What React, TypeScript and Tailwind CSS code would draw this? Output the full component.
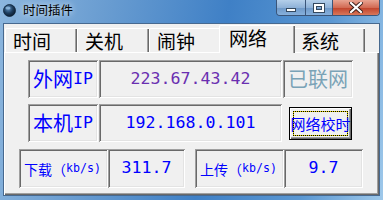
import React from "react";

const cjk = "font-['Noto_Sans_CJK_SC',sans-serif]";
const mono = "font-['DejaVu_Sans_Mono',monospace]";

// sunken 3D edge, like a classic win32 static with client edge
const sunken =
  "shadow-[inset_1px_1px_0_#a0a0a0,inset_-1px_-1px_0_#ffffff,inset_2px_2px_0_#696969,inset_-2px_-2px_0_#e3e3e3]";

function Box({ className, children }: { className: string; children?: React.ReactNode }) {
  return (
    <div className={`flex items-center h-full bg-[#f0f0f0] ${sunken} ${className}`}>
      {children}
    </div>
  );
}

function TitleBar() {
  return (
    <div className="flex h-[23px] shrink-0">
      <div className="flex items-center pl-[3px] gap-[7px] h-[21px]">
        <svg width="13" height="13" viewBox="0 0 13 13">
          <defs>
            <radialGradient id="g" cx="0.4" cy="0.35" r="0.7">
              <stop offset="0" stopColor="#5d8fbf" />
              <stop offset="0.55" stopColor="#1d3c5c" />
              <stop offset="1" stopColor="#0b1a2b" />
            </radialGradient>
          </defs>
          <circle cx="6.5" cy="6.5" r="6" fill="url(#g)" stroke="#0f2338" strokeWidth="0.8" />
          <ellipse cx="5" cy="4" rx="2.6" ry="1.5" fill="#9cc4e8" opacity="0.7" />
        </svg>
        <span
          className={`${cjk} text-[12.5px] leading-none text-black [text-shadow:0_0_6px_rgba(255,255,255,0.9)]`}
        >
          时间插件
        </span>
      </div>
      <div className="flex-1" />
      {/* caption buttons */}
      <div className="flex h-[16px] mr-[3px] border border-t-0 border-[#3a5579] rounded-b-[4px] overflow-hidden">
        <div className="w-[29px] flex items-end justify-center pb-[3px] bg-[linear-gradient(180deg,#b4cfea_0%,#8fb2d8_50%,#6e98c7_51%,#86b0dc_100%)] border-r border-[#3a5579]">
          <div className="w-[10px] h-[4px] bg-white border border-[#34495f]" />
        </div>
        <div className="w-[27px] flex items-center justify-center bg-[linear-gradient(180deg,#b4cfea_0%,#8fb2d8_50%,#6e98c7_51%,#86b0dc_100%)] border-r border-[#3a5579]">
          <div className="w-[10px] h-[8px] border-[2px] border-white shadow-[0_0_0_1px_#34495f,inset_0_0_0_1px_#34495f]" />
        </div>
        <div className="w-[46px] flex items-center justify-center bg-[linear-gradient(180deg,#e8a492_0%,#d26b54_50%,#c0412a_51%,#d8775a_100%)]">
          <svg width="14" height="11" viewBox="0 0 14 11">
            <path d="M2 1 L12 10 M12 1 L2 10" stroke="#3b1f1a" strokeWidth="4" strokeLinecap="square" />
            <path d="M2 1 L12 10 M12 1 L2 10" stroke="#ffffff" strokeWidth="2.2" strokeLinecap="square" />
          </svg>
        </div>
      </div>
    </div>
  );
}

function Tab({ label, active }: { label: string; active?: boolean }) {
  if (active) {
    return (
      <div
        className={`relative z-10 w-[76px] h-[28px] -mx-[2px] -mb-[1px] bg-[#f0f0f0] border-t border-l border-white rounded-tl-[2px] shadow-[inset_-1px_0_0_#696969,inset_-2px_0_0_#a0a0a0] pl-[9px] pt-[1px] ${cjk} text-[19px] leading-[22px] text-black`}
      >
        {label}
      </div>
    );
  }
  return (
    <div
      className={`w-[72px] h-[24px] bg-[#f0f0f0] border-t border-l border-white rounded-tl-[2px] shadow-[inset_-1px_0_0_#696969,inset_-2px_0_0_#a0a0a0] pl-[7px] pt-[1px] ${cjk} text-[19px] leading-[22px] text-black`}
    >
      {label}
    </div>
  );
}

export default function App() {
  return (
    <div className="w-[383px] h-[200px] overflow-hidden flex flex-col bg-[linear-gradient(100deg,#8cb6de_0%,#6a9dd1_25%,#3f80c6_55%,#5a97d2_80%,#9ec8ea_100%)]">
      <TitleBar />
      <div className="flex-1 mx-[3px] mb-[4px] border border-[#47698f] bg-[#f0f0f0] flex flex-col">
        {/* tab strip */}
        <div className="flex items-end h-[28px] pl-[1px] shrink-0">
          <Tab label="时间" />
          <Tab label="关机" />
          <Tab label="闹钟" />
          <Tab label="网络" active />
          <Tab label="系统" />
        </div>

        {/* tab page */}
        <div className="flex-1 border-t border-l border-white shadow-[inset_-1px_-1px_0_#696969,inset_-2px_-2px_0_#a0a0a0] flex flex-col pt-[7px]">
          {/* row 1 */}
          <div className="flex h-[38px] pl-[23px] gap-[1px]">
            <Box className="w-[70px] justify-center text-[#0000ff]">
              <span className={`${cjk} text-[20px] leading-none`}>外网</span>
              <span className={`${mono} text-[16.6px] leading-none`}>IP</span>
            </Box>
            <Box className="w-[183px] justify-center">
              <span className={`${mono} text-[16.6px] leading-none text-[#6a2fb0]`}>223.67.43.42</span>
            </Box>
            <Box className="w-[70px] justify-center">
              <span className={`${cjk} text-[20px] leading-none text-[#7aa3b7]`}>已联网</span>
            </Box>
          </div>

          {/* row 2 */}
          <div className="flex h-[38px] mt-[6px] pl-[23px] gap-[1px] items-center">
            <Box className="w-[70px] justify-center text-[#0000ff]">
              <span className={`${cjk} text-[20px] leading-none`}>本机</span>
              <span className={`${mono} text-[16.6px] leading-none`}>IP</span>
            </Box>
            <Box className="w-[183px] justify-center">
              <span className={`${mono} text-[16.6px] leading-none text-[#0000ff]`}>192.168.0.101</span>
            </Box>
            <div className="ml-[6px] w-[63px] h-[33px] border border-black bg-[#f0f0f0] shadow-[inset_1px_1px_0_#ffffff,inset_-1px_-1px_0_#696969,inset_-2px_-2px_0_#a0a0a0] p-[3px] relative">
              <div className="w-full h-full border border-[#e6d600] outline-1 outline-dotted outline-black -outline-offset-1" />
              <div className="absolute inset-0 flex items-center justify-center">
                <span className={`${cjk} text-[15px] leading-none text-[#0000ff] whitespace-nowrap`}>网络校时</span>
              </div>
            </div>
          </div>

          {/* row 3 */}
          <div className="flex h-[39px] mt-[7px] pl-[14px]">
            <Box className="w-[89px] pl-[5px] text-[#0000ff]">
              <span className={`${cjk} text-[14px] leading-none`}>下载（</span>
              <span className={`${mono} text-[11.6px] leading-none`}>kb/s)</span>
            </Box>
            <Box className="w-[77px] justify-center">
              <span className={`${mono} text-[16.6px] leading-none text-[#0000ff]`}>311.7</span>
            </Box>
            <Box className="w-[89px] ml-[10px] pl-[5px] text-[#0000ff]">
              <span className={`${cjk} text-[14px] leading-none`}>上传（</span>
              <span className={`${mono} text-[11.6px] leading-none`}>kb/s)</span>
            </Box>
            <Box className="w-[79px] justify-center">
              <span className={`${mono} text-[16.6px] leading-none text-[#0000ff]`}>9.7</span>
            </Box>
          </div>
        </div>
      </div>
    </div>
  );
}
